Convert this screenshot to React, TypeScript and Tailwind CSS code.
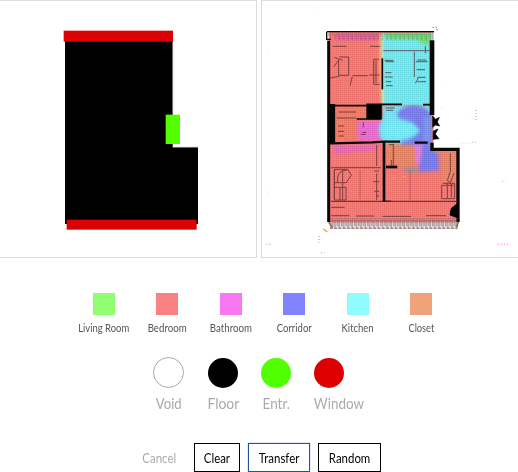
import React from "react";

const rooms = [
  { name: "Living Room", color: "bg-[#92ff72]", fit: "scale-x-[0.86]" },
  { name: "Bedroom", color: "bg-[#fa8282]", fit: "scale-x-[0.88]" },
  { name: "Bathroom", color: "bg-[#f778f2]", fit: "scale-x-[0.88]" },
  { name: "Corridor", color: "bg-[#8284ff]", fit: "scale-x-[0.86]" },
  { name: "Kitchen", color: "bg-[#8ffbff]", fit: "scale-x-[0.86]" },
  { name: "Closet", color: "bg-[#eea37b]", fit: "scale-x-[0.84]" },
];

const tools = [
  { name: "Void", color: "border border-[#aaa] bg-white", box: "w-[55px]", fit: "scale-x-[0.82]" },
  { name: "Floor", color: "bg-black", box: "w-[53px]", fit: "scale-x-[0.87]" },
  { name: "Entr.", color: "bg-[#52ff00]", box: "w-[53px]", fit: "scale-x-[0.84]" },
  { name: "Window", color: "bg-[#dd0000]", box: "w-[53px]", fit: "scale-x-[0.84]" },
];

function InputPlan() {
  return (
    <svg className="block h-[256px] w-[256px]" viewBox="0 3 768 768">
      <path d="M195 105H518V442H594V672H195Z" fill="#000" />
      <path d="M518 126V343M518 442H594" stroke="#888" strokeWidth="2" />
      <rect x="191" y="92" width="328" height="33" fill="#dd0000" />
      <rect x="497" y="344" width="43" height="88" fill="#52ff00" />
      <rect x="200" y="659" width="390" height="30" fill="#dd0000" />
    </svg>
  );
}

function OutputPlan() {
  return (
    <svg className="block h-[256px] w-[256px]" viewBox="18 3 768 768">
      <defs>
        <pattern id="weave" width="6" height="6" patternUnits="userSpaceOnUse">
          <rect width="3" height="3" fill="#000" opacity=".06" />
          <rect x="3" y="3" width="3" height="3" fill="#fff" opacity=".07" />
        </pattern>
        <pattern id="teeth" width="13" height="30" patternUnits="userSpaceOnUse">
          <path d="M3 0v30M10 0v18" stroke="#603c42" strokeWidth="4" opacity=".6" />
        </pattern>
        <filter id="soft" x="-20%" y="-20%" width="140%" height="140%" colorInterpolationFilters="sRGB">
          <feGaussianBlur stdDeviation="5" />
        </filter>
        <filter id="haze" x="-20%" y="-20%" width="140%" height="140%" colorInterpolationFilters="sRGB">
          <feGaussianBlur stdDeviation="10" />
        </filter>
        <filter id="wall" filterUnits="userSpaceOnUse" x="190" y="70" width="440" height="640" colorInterpolationFilters="sRGB">
          <feTurbulence type="fractalNoise" baseFrequency=".05" numOctaves="2" seed="4" result="noise" />
          <feDisplacementMap in="SourceGraphic" in2="noise" scale="4" xChannelSelector="R" yChannelSelector="G" />
          <feGaussianBlur stdDeviation="1.2" />
        </filter>
        <clipPath id="outline">
          <path d="M217 95H533V448H608V668H217Z" />
        </clipPath>
      </defs>
      <g clipPath="url(#outline)">
        <path d="M217 95H533V448H608V668H217Z" fill="#f87772" />
        <path d="M378 100H530V315H378Z" fill="#72e9f1" />
        <g filter="url(#soft)">
          <path d="M240 103H376V120H240Z" fill="#dd609e" />
          <path d="M390 100H530L516 138L480 118H390Z" fill="#70db72" />
          <path d="M376 100V178L380 310" fill="none" stroke="#f8df83" strokeWidth="7" />
          <path d="M238 320H330V420H238Z" fill="#f37a65" />
          <path d="M304 364H375V423H304Z" fill="#ed69d3" />
          <path d="M228 435H375L350 452L290 456L240 466Z" fill="#ec66b7" />
          <path d="M390 430H485V490L455 502H390Z" fill="#e88563" />
          <path d="M556 456H602V540L560 550Z" fill="#ed8566" />
          <path d="M475 432H510V495H480Z" fill="#e77bdf" />
          <path d="M380 316H528V430H382Q360 390 380 355Z" fill="#73e2f5" />
          <path d="M424 340Q442 314 480 317Q520 322 528 350V435H437L435 418Q480 414 492 390L470 370L428 358Z" fill="#787df0" />
          <path d="M500 435H522L548 467V512L488 516Z" fill="#777cf0" />
          <path d="M445 503H485V515H445Z" fill="#8995a2" />
          <path d="M503 350H522V425H503Z" fill="#77aaf2" opacity=".6" />
        </g>
        <path d="M377 369Q415 347 458 370Q496 391 455 416Q410 428 378 409Q370 386 377 369Z" fill="#72edfa" filter="url(#haze)" />
        <path d="M217 95H533V448H608V668H217Z" fill="url(#weave)" />
      </g>
      <g fill="none" stroke="#090606" filter="url(#wall)">
        <path d="M213 95H534M212 95V118H225" strokeWidth="4" />
        <path d="M218 122V666" strokeWidth="9" />
        <path d="M528 121V345" strokeWidth="14" />
        <path d="M229 312V430" strokeWidth="17" />
        <path d="M528 428V448H606V666" strokeWidth="10" />
        <path d="M222 430L350 427L384 425H432M476 428H515" strokeWidth="7" />
        <path d="M384 426V604" strokeWidth="8" />
        <path d="M379 175V268" strokeWidth="5" />
        <path d="M331 313H438M302 357H376M501 314H525M236 317H330" strokeWidth="5" />
        <path d="M332 314H377V357H332Z" fill="#000" strokeWidth="2" />
        <path d="M225 604H600M382 603H405" strokeWidth="2.5" opacity=".8" />
        <path d="M390 501H424" strokeWidth="8" />
        <path d="M586 625L606 610V654L582 645Z" fill="#000" strokeWidth="3" />
        <path d="M530 348L539 358L550 352L544 366L551 378L538 375L530 382ZM532 393L546 387L538 402L549 416L531 418Z" fill="#000" strokeWidth="2" />
      </g>
      <g fill="none" stroke="#52272b" strokeWidth="3" opacity=".72" filter="url(#wall)">
        <path d="M230 139H271M342 139H372M235 172L260 181M250 171H278V226H248V180L233 201M222 234L250 229M290 227H335M289 230L282 257M340 225H370M369 178H353V253H371M360 182V249" />
        <path d="M382 152H525M475 155V231M508 139V160M388 185H414M386 181H412M388 218H406M386 231H410M389 245H406M390 257H410M479 185H515M484 180H511M482 209H507M484 232H508M484 245H510M478 250L487 234M388 324H416M390 331H412" />
        <path d="M248 336H300M242 354H300M246 378H264M246 394H264M248 408H264M322 367V382M319 397H331M315 403H329" />
        <path d="M225 503H375M235 508V598M260 511V600M235 562H270V600H235V508H275L286 525L271 548H236M273 510Q240 510 245 548M252 564V600M362 435V498M355 513H369M362 520V600M351 545H370M355 574H370M360 588H370" />
        <path d="M312 510V596M462 509V600" opacity=".45" />
        <path d="M412 431V499M399 434H414M406 480V499M583 460V514L574 542L583 548L594 520M560 550H596V596H557V556H593M574 548V594M586 551V592M225 647H280M300 648H355M380 649H465M226 622H266M510 647H570" />
      </g>
      <path d="M409 536L422 531M432 538L441 529L451 532" fill="none" stroke="#e9a261" strokeWidth="3" />
      <rect x="216" y="98" width="310" height="22" fill="url(#teeth)" opacity=".4" />
      <rect x="222" y="665" width="384" height="22" fill="#aaa" opacity=".4" />
      <rect x="222" y="658" width="384" height="28" fill="url(#teeth)" opacity=".7" />
      <path d="M225 656H604M222 685H604" fill="none" stroke="#a9787a" strokeWidth="4" strokeDasharray="8 5" />
      <path d="M218 667L230 683M607 666L602 682" fill="none" stroke="#756138" strokeWidth="4" />
      <g strokeWidth="4" strokeDasharray="3 6" fill="none">
        <path d="M530 82H546M543 88V94" stroke="#329447" />
        <path d="M202 687L214 696" stroke="#ef9b30" strokeDasharray="none" />
        <path d="M189 708V728M31 733H43M196 758H206M725 733H756" stroke="#f47de7" />
        <path d="M660 330V366M647 427H665M738 544H748" stroke="#dda4d0" />
        <path d="M186 24H194M281 73H292M32 158H40M38 575V585M610 430H645" stroke="#e9c1ef" strokeWidth="2" />
        <path d="M566 251H575M555 323H565M640 356H655" stroke="#a5e8ef" strokeWidth="2" />
      </g>
    </svg>
  );
}

export default function App() {
  return (
    <main className="h-[472px] w-[518px] overflow-hidden bg-white font-['Lato',sans-serif]">
      <div className="flex gap-1">
        <section className="h-[258px] w-[257px] shrink-0 border-y border-r border-[#ddd]">
          <InputPlan />
        </section>
        <section className="h-[258px] w-[257px] shrink-0 border-y border-l border-[#ddd]">
          <OutputPlan />
        </section>
      </div>

      <div className="mt-[35px] ml-[72px] grid w-[381px] grid-cols-6">
        {rooms.map((room) => (
          <div key={room.name} className="flex flex-col items-center">
            <div className={`h-[22px] w-[22px] ${room.color}`} />
            <span className={`mt-[5px] mb-px text-[11px] leading-4 whitespace-nowrap text-[#555] ${room.fit}`}>{room.name}</span>
          </div>
        ))}
      </div>

      <div className="mt-5 ml-[153px] flex">
        {tools.map((tool) => (
          <div key={tool.name} className={`shrink-0 ${tool.box}`}>
            <div className={`flex flex-col items-center ${tool.name === "Window" ? "w-[49px]" : tool.name === "Void" ? "w-[32px]" : "w-[30px]"}`}>
              <div className={`rounded-full ${tool.name === "Void" ? "h-[31px] w-[31px]" : "mt-px h-[30px] w-[30px]"} ${tool.name === "Window" || tool.name === "Void" ? "self-start" : ""} ${tool.color}`} />
              <span className={`mt-[3px] mb-px text-[16px] leading-6 whitespace-nowrap text-[#aaa] ${tool.fit}`}>{tool.name}</span>
            </div>
          </div>
        ))}
      </div>

      <div className="mt-[27px] ml-[132px] flex gap-2 text-[13px] leading-5 text-black">
        <button className="flex h-[29px] w-[54px] items-center justify-center text-[#aaa]"><span className="scale-x-[0.88]">Cancel</span></button>
        <button className="flex h-[29px] w-[46px] items-center justify-center border border-black"><span className="scale-x-[0.88]">Clear</span></button>
        <button className="flex h-[29px] w-[62px] items-center justify-center border border-[#2450a0] shadow-[0_0_1px_#5b8be0]"><span className="scale-x-[0.88]">Transfer</span></button>
        <button className="flex h-[29px] w-[63px] items-center justify-center border border-black"><span className="scale-x-[0.88]">Random</span></button>
      </div>
    </main>
  );
}
